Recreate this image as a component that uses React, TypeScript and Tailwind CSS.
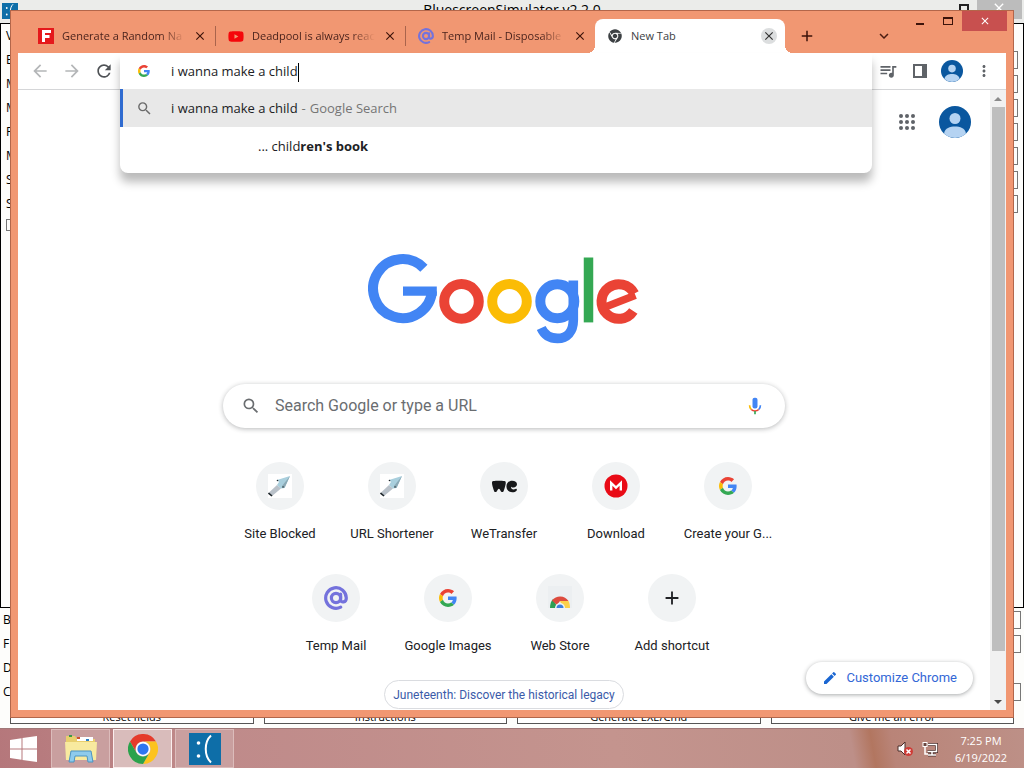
import React from 'react';
import {
  MdAdd,
  MdArrowBack,
  MdArrowForward,
  MdClose,
  MdEdit,
  MdExpandMore,
  MdMoreVert,
  MdQueueMusic,
  MdRefresh,
  MdSearch,
} from 'react-icons/md';
import { FaChrome, FaYoutube } from 'react-icons/fa';
import { SiWetransfer } from 'react-icons/si';

const GoogleG: React.FC<{ size: number }> = ({ size }) => (
  <svg width={size} height={size} viewBox="0 0 48 48" aria-hidden="true">
    <path fill="#EA4335" d="M24 9.5c3.54 0 6.71 1.22 9.21 3.6l6.85-6.85C35.9 2.38 30.47 0 24 0 14.62 0 6.51 5.38 2.56 13.22l7.98 6.19C12.43 13.72 17.74 9.5 24 9.5z" />
    <path fill="#4285F4" d="M46.98 24.55c0-1.57-.15-3.09-.38-4.55H24v9.02h12.94c-.58 2.96-2.26 5.48-4.78 7.18l7.73 6c4.51-4.18 7.09-10.36 7.09-17.65z" />
    <path fill="#FBBC05" d="M10.53 28.59c-.48-1.45-.76-2.99-.76-4.59s.27-3.14.76-4.59l-7.98-6.19C.92 16.46 0 20.12 0 24c0 3.88.92 7.54 2.56 10.78l7.97-6.19z" />
    <path fill="#34A853" d="M24 48c6.48 0 11.93-2.13 15.89-5.81l-7.73-6c-2.15 1.45-4.92 2.3-8.16 2.3-6.26 0-11.57-4.22-13.47-9.91l-7.98 6.19C6.51 42.62 14.62 48 24 48z" />
  </svg>
);

const GoogleLogo: React.FC = () => (
  <svg width="272" height="90" viewBox="0 0 272 90" fill="none" role="img" aria-label="Google">
    <path stroke="#4285F4" strokeWidth="10" d="M55.9 14.2A29.5 29.5 0 1 0 64 37" />
    <path stroke="#4285F4" strokeWidth="9.2" d="M35 37.2H68.8" />
    <circle stroke="#EA4335" strokeWidth="10" cx="93.5" cy="47.4" r="17.3" />
    <circle stroke="#FBBC05" strokeWidth="10" cx="141.5" cy="47.4" r="17.3" />
    <circle stroke="#4285F4" strokeWidth="10" cx="189.3" cy="47.2" r="17" />
    <path stroke="#4285F4" strokeWidth="9.6" d="M205.3 26.5V66c0 12-6.5 18.4-15.8 18.4-7.6 0-13.4-4-16.3-10.4" />
    <path stroke="#34A853" strokeWidth="9.5" d="M220.5 3.5V68.4" />
    <path stroke="#EA4335" strokeWidth="10" d="M265.3 57A17.3 17.3 0 1 1 266.2 39.6" />
    <path stroke="#EA4335" strokeWidth="7.6" d="M238 52.8L267.4 41.2" />
  </svg>
);

const ChromeLogo: React.FC = () => (
  <svg width="30" height="30" viewBox="0 0 48 48" aria-hidden="true">
    <path fill="#E53B2C" d="M3.2 12A24 24 0 0 1 44.8 12H24A12 12 0 0 0 13.6 30Z" />
    <path fill="#FCC31E" d="M44.8 12A24 24 0 0 1 24 48L34.4 30A12 12 0 0 0 24 12Z" />
    <path fill="#2BA24C" d="M24 48A24 24 0 0 1 3.2 12L13.6 30A12 12 0 0 0 34.4 30Z" />
    <circle cx="24" cy="24" r="11.5" fill="#fff" />
    <circle cx="24" cy="24" r="9" fill="#2E75F0" />
  </svg>
);

const AtSign: React.FC<{ size: number }> = ({ size }) => (
  <svg width={size} height={size} viewBox="0 0 24 24" fill="none" stroke="#7472dc" strokeWidth="3.2" strokeLinecap="round" aria-hidden="true">
    <circle cx="12" cy="12" r="4.6" />
    <path d="M16.6 8v5.5c0 3.8 5.7 3.2 5.7-1.5a10.3 10.3 0 1 0-5.6 9.2" />
  </svg>
);

const FakeNameIcon: React.FC = () => (
  <svg width="16" height="16" viewBox="0 0 16 16" aria-hidden="true">
    <rect width="16" height="16" fill="#e5191c" />
    <path fill="none" stroke="#fff" strokeWidth="3" d="M5.5 14V3.5H13M5.5 8.5H11.5" />
  </svg>
);

const Avatar: React.FC<{ size: number }> = ({ size }) => (
  <svg width={size} height={size} viewBox="0 0 32 32" aria-hidden="true">
    <circle cx="16" cy="16" r="16" fill="#0a579f" />
    <circle cx="16" cy="12.5" r="5.5" fill="#b5d3f2" />
    <path fill="#b5d3f2" d="M5 27.5C6 22 11 20.5 16 20.5S26 22 27 27.5A16 16 0 0 1 5 27.5Z" />
  </svg>
);

const RocketTile: React.FC = () => (
  <svg width="24" height="24" viewBox="0 0 24 24" aria-hidden="true">
    <rect width="24" height="24" fill="#fff" />
    <path fill="#b9c1c9" d="M.5 19L9 11L13 14.5L4 22Z" />
    <path fill="#a9cfdd" d="M9 6L22 2L16.5 14L13 14.5L9 11L11 8Z" />
    <path fill="#8ba9b5" d="M22 2L16.5 14L14 12Z" />
    <path fill="none" stroke="#1d252a" strokeWidth="1.6" d="M.5 19L4 22" />
    <circle cx="9.5" cy="6.5" r=".8" fill="#1d252a" />
    <circle cx="15" cy="13" r=".8" fill="#1d252a" />
  </svg>
);

const MegaIcon: React.FC = () => (
  <svg width="24" height="24" viewBox="0 0 24 24" aria-hidden="true">
    <circle cx="12" cy="12" r="11.5" fill="#e90b16" />
    <path fill="none" stroke="#fff" strokeWidth="2.4" d="M7.2 16.5V9L12 13.6L16.8 9V16.5" />
  </svg>
);

const WebStoreIcon: React.FC = () => (
  <svg width="24" height="24" viewBox="0 0 24 24" aria-hidden="true">
    <rect width="24" height="22" fill="#eceff1" />
    <path fill="#2f9e54" d="M2 22C2 18 3 15 5 13L10 22Z" />
    <path fill="#dd4b3e" d="M4 14.5A10 10 0 0 1 20.5 15H12L9 19Z" />
    <path fill="#fcd04b" d="M12 15H20.5C21.5 17 22 19.5 22 22H15Z" />
    <path fill="#eef3f8" d="M7 22a5 5 0 0 1 10 0Z" />
    <path fill="#3f7fdc" d="M8.5 22a3.5 3.5 0 0 1 7 0Z" />
  </svg>
);

const Frown: React.FC<{ size: number }> = ({ size }) => (
  <svg width={size} height={size} viewBox="0 0 32 32" aria-hidden="true">
    <rect width="32" height="32" fill="#0e6ea8" />
    <circle cx="9.5" cy="10" r="1.8" fill="#fff" />
    <circle cx="9.5" cy="23" r="1.8" fill="#fff" />
    <path fill="none" stroke="#fff" strokeWidth="2" d="M22 2.5C15 9 15 23 22 29.5" />
  </svg>
);

const tabs = [
  { title: 'Generate a Random Na', icon: <FakeNameIcon /> },
  { title: 'Deadpool is always reac', icon: <FaYoutube size={17} color="#f5060a" /> },
  { title: 'Temp Mail - Disposable', icon: <AtSign size={16} /> },
];

const shortcuts = [
  { name: 'Site Blocked', icon: <RocketTile /> },
  { name: 'URL Shortener', icon: <RocketTile /> },
  { name: 'WeTransfer', icon: <SiWetransfer size={25} color="#17181a" /> },
  { name: 'Download', icon: <MegaIcon /> },
  { name: 'Create your G...', icon: <GoogleG size={18} /> },
  { name: 'Temp Mail', icon: <AtSign size={24} /> },
  { name: 'Google Images', icon: <GoogleG size={18} /> },
  { name: 'Web Store', icon: <WebStoreIcon /> },
];

/* Simulator window that sits behind the browser */
const SimulatorWindow: React.FC = () => (
  <section className="absolute inset-0 flex flex-col overflow-hidden bg-[#fdfdfb] text-[12px] text-black">
    <header className="flex h-[23px] shrink-0 items-start justify-between bg-[#ebecea]">
      <div className="w-[90px] pt-[3px] pl-[2px]">
        <Frown size={16} />
      </div>
      <h1 className="text-[14px] leading-5">BluescreenSimulator v2.2.0</h1>
      <div className="flex w-[90px] items-start justify-end pr-[2px]">
        <span className="mt-1 mr-2 h-3 w-[10px] border-2 border-[#222]" />
        <span className="flex h-[19px] w-[45px] justify-center bg-[#bcbcbc] text-white">
          <MdClose size={16} />
        </span>
      </div>
    </header>
    <div className="flex h-[585px] shrink-0 justify-between border border-black">
      <ul className="pl-[5px] leading-6">
        {['V', 'E', 'M', 'M', 'P', 'M', 'S', 'S'].map((letter, i) => (
          <li key={i}>{letter}</li>
        ))}
        <li className="mt-[3px] h-3 w-3 border border-[#777]" />
      </ul>
      <div className="flex flex-col gap-[6px] pt-[27px] pr-[5px]">
        {[0, 1, 2, 3, 4, 5, 6].map((i) => (
          <span key={i} className="h-[18px] w-10 border border-[#777]" />
        ))}
      </div>
    </div>
    <ul className="pl-[3px] leading-6">
      {['B', 'F', 'D', 'C'].map((letter) => (
        <li key={letter} className="flex items-center justify-between pr-[3px]">
          {letter}
          {letter !== 'D' && <span className="h-[18px] w-10 border border-[#777]" />}
        </li>
      ))}
    </ul>
    <footer className="mt-auto mb-1 grid grid-cols-4 gap-[10px] px-[10px]">
      {['Reset fields', 'Instructions', 'Generate EXE/Cmd', 'Give me an error'].map((label) => (
        <button key={label} className="h-[18px] border border-[#555] bg-white pt-[2px] text-[11px] leading-4">
          {label}
        </button>
      ))}
    </footer>
  </section>
);

const TabStrip: React.FC = () => (
  <div className="flex h-[42px] shrink-0 items-end pl-[15px]">
    {tabs.map((tab) => (
      <div key={tab.title} className="flex h-[34px] w-[190px] items-center pl-3">
        <span className="flex w-4 shrink-0 justify-center">{tab.icon}</span>
        <span className="ml-2 w-[124px] bg-gradient-to-r from-[#46201a] from-80% to-[#f3976f] bg-clip-text text-[11px] whitespace-nowrap text-transparent">
          {tab.title}
        </span>
        <button aria-label={`Close ${tab.title}`} className="ml-2 text-[#3d130a]">
          <MdClose size={14} />
        </button>
        <span className="ml-2 h-5 w-px bg-[#a9644c]" />
      </div>
    ))}
    <div className="relative -ml-px flex h-[34px] w-[190px] items-center rounded-t-lg bg-white pl-[13px]">
      <span className="absolute bottom-0 -left-2 h-2 w-2 bg-[radial-gradient(circle_at_0_0,transparent_8px,white_8px)]" />
      <FaChrome size={14} color="#3c4043" />
      <span className="ml-[9px] flex-1 text-[11px] text-[#3c4043]">New Tab</span>
      <button aria-label="Close New Tab" className="mr-2 flex h-4 w-4 items-center justify-center rounded-full bg-[#dcdedf] text-[#333]">
        <MdClose size={14} />
      </button>
      <span className="absolute -right-2 bottom-0 h-2 w-2 bg-[radial-gradient(circle_at_100%_0,transparent_8px,white_8px)]" />
    </div>
    <button aria-label="New tab" className="ml-3 flex h-[34px] w-5 items-center justify-center text-[#3d130a]">
      <MdAdd size={18} />
    </button>
    <div className="flex-1" />
    <button aria-label="Search tabs" className="mr-2 flex h-[34px] w-7 items-center justify-center text-[#4a1d12]">
      <MdExpandMore size={18} />
    </button>
    <div className="mr-[6px] flex self-start">
      <button aria-label="Minimize" className="flex h-5 w-7 items-center justify-center pt-[6px]">
        <span className="h-[2px] w-2 bg-[#3d130a]" />
      </button>
      <button aria-label="Maximize" className="flex h-5 w-7 items-center justify-center">
        <span className="h-2 w-[10px] border border-t-2 border-[#3d130a]" />
      </button>
      <button aria-label="Close" className="flex h-5 w-[45px] items-center justify-center bg-[#c8504f] text-white">
        <MdClose size={12} />
      </button>
    </div>
  </div>
);

const Omnibox: React.FC = () => (
  <div className="relative h-full flex-1">
    <div className="absolute inset-x-0 top-0 z-20 overflow-hidden rounded-b-lg bg-white pb-2 text-[13px] text-[#202124] shadow-[0_9px_10px_rgba(0,0,0,0.27)]">
      <div className="flex h-9 items-center pl-[18px]">
        <GoogleG size={12} />
        <div className="ml-[21px] flex flex-1 items-center pt-[2px]">
          <input
            aria-label="Address and search bar"
            className="field-sizing-content bg-transparent outline-none"
            defaultValue="i wanna make a child"
          />
          <span className="h-[19px] w-px bg-black" />
        </div>
      </div>
      <div className="flex h-[38px] items-center border-l-[3px] border-[#2f6bd0] bg-[#e8e8e8] pl-[13px]">
        <MdSearch size={17} color="#6b6b6b" />
        <p className="ml-[18px] flex gap-1 pt-[2px]">
          <span>i wanna make a child</span>
          <span className="text-[#757575]">-</span>
          <span className="text-[#757575]">Google Search</span>
        </p>
      </div>
      <div className="flex h-[38px] items-center pl-[138px]">
        <p className="pt-[2px]">
          ... child<b>ren's book</b>
        </p>
      </div>
    </div>
  </div>
);

const toolButton = 'flex h-8 w-8 items-center justify-center';

const Toolbar: React.FC = () => (
  <div className="flex h-[37px] shrink-0 items-center border-b border-[#d5d6d8] bg-white px-[6px] text-[#5f6368]">
    <button aria-label="Back" className={`${toolButton} text-[#b4b6b8]`}><MdArrowBack size={20} /></button>
    <button aria-label="Forward" className={`${toolButton} text-[#b4b6b8]`}><MdArrowForward size={20} /></button>
    <button aria-label="Reload" className={`${toolButton} text-[#4f5256]`}><MdRefresh size={20} /></button>
    <Omnibox />
    <button aria-label="Media controls" className={toolButton}><MdQueueMusic size={20} /></button>
    <button aria-label="Side panel" className={toolButton}>
      <span className="h-[14px] w-[14px] border-2 border-r-[5px] border-[#5f6368]" />
    </button>
    <button aria-label="Profile" className={toolButton}><Avatar size={22} /></button>
    <button aria-label="Menu" className={toolButton}><MdMoreVert size={18} /></button>
  </div>
);

const NewTabPage: React.FC = () => (
  <main className="relative flex min-w-0 flex-1 flex-col items-center overflow-hidden bg-white font-[Roboto,sans-serif] text-[#202124]">
    <div className="flex shrink-0 items-center gap-6 self-end pt-4 pr-[19px]">
      <button aria-label="Google apps" className="grid grid-cols-3 gap-[2px]">
        {[0, 1, 2, 3, 4, 5, 6, 7, 8].map((i) => (
          <span key={i} className="h-1 w-1 rounded-full bg-[#5f6368]" />
        ))}
      </button>
      <button aria-label="Google account"><Avatar size={32} /></button>
    </div>

    <div className="mt-[116px] shrink-0"><GoogleLogo /></div>

    <div className="mt-10 flex h-[44px] w-[562px] shrink-0 items-center rounded-full bg-white pr-5 pl-[18px] shadow-[0_1px_5px_rgba(32,33,36,0.32)]">
      <MdSearch size={20} color="#6a6d70" />
      <input
        aria-label="Search Google or type a URL"
        placeholder="Search Google or type a URL"
        className="ml-[14px] flex-1 bg-transparent text-[16px] outline-none placeholder:text-[#6a6d70]"
      />
      <button aria-label="Search by voice">
        <svg width="20" height="20" viewBox="0 0 24 24" fill="none">
          <rect x="9" y="2" width="6" height="13" rx="2.5" fill="#4285F4" />
          <path stroke="#FBBC05" strokeWidth="2" d="M5.5 11C5.5 13.5 6.3 15 7.5 16.2" />
          <path stroke="#EA4335" strokeWidth="2" d="M7.5 16.2C10 18.5 14 18.5 16.5 16.2" />
          <path stroke="#4285F4" strokeWidth="2" d="M16.5 16.2C17.7 15 18.5 13.5 18.5 11" />
          <path stroke="#34A853" strokeWidth="2" d="M12 18V22" />
        </svg>
      </button>
    </div>

    <nav className="mt-[18px] flex w-[560px] shrink-0 flex-wrap justify-center text-[13px]">
      {shortcuts.map((item) => (
        <a key={item.name} href="#" className="flex h-28 w-28 flex-col items-center pt-4">
          <span className="flex h-12 w-12 items-center justify-center rounded-full bg-[#f1f3f4]">{item.icon}</span>
          <span className="mt-[14px] leading-5">{item.name}</span>
        </a>
      ))}
      <button className="flex h-28 w-28 flex-col items-center pt-4">
        <span className="flex h-12 w-12 items-center justify-center rounded-full bg-[#f1f3f4]"><MdAdd size={22} /></span>
        <span className="mt-[14px] leading-5">Add shortcut</span>
      </button>
    </nav>

    <a href="#" className="mt-[10px] flex h-[29px] shrink-0 items-center rounded-full border border-[#dadce0] px-2 text-[12px] text-[#3b5ba9]">
      Juneteenth: Discover the historical legacy
    </a>

    <button className="absolute right-[17px] bottom-4 flex h-8 items-center gap-2 rounded-full bg-white px-4 text-[13px] text-[#3367d6] shadow-[0_1px_4px_rgba(60,64,67,0.45)]">
      <MdEdit size={16} color="#1a66d2" />
      Customize Chrome
    </button>
  </main>
);

const BrowserWindow: React.FC = () => (
  <section className="absolute inset-[10px] flex flex-col border border-[#b3664a] bg-[#f19772]">
    <TabStrip />
    <div className="mx-[7px] mb-[7px] flex min-h-0 flex-1 flex-col">
      <Toolbar />
      <div className="flex min-h-0 flex-1">
        <NewTabPage />
        <div className="flex w-4 flex-col items-center bg-[#f1f1f1]">
          <span className="flex h-[17px] items-center">
            <span className="border-x-4 border-b-4 border-x-transparent border-b-[#8a8a8a]" />
          </span>
          <span className="h-[544px] w-[13px] bg-[#bebebe]" />
          <span className="mt-auto flex h-[17px] items-center">
            <span className="border-x-4 border-t-4 border-x-transparent border-t-[#4a4a4a]" />
          </span>
        </div>
      </div>
    </div>
  </section>
);

const Taskbar: React.FC = () => (
  <footer className="flex h-10 shrink-0 items-center border-t border-[#a07878] bg-[linear-gradient(80deg,#b5777b_0%,#bf8a8a_20%,#c4948e_60%,#bd8f88_83%,#b27660_85%,#b98478_87%,#bd9087_100%)]">
    <button aria-label="Start" className="flex w-[51px] justify-center pr-1">
      <svg width="27" height="26" viewBox="0 0 27 26" fill="#fff">
        <path d="M0 4L11.5 2.3V12.5H0ZM12.5 2.1L27 0V12.5H12.5ZM0 13.5H11.5V23.7L0 22ZM12.5 13.5H27V26L12.5 23.9Z" />
      </svg>
    </button>
    <div className="flex h-full gap-[3px]">
      <button aria-label="File Explorer" className="flex w-[59px] items-center justify-center border border-[#dcbcbb] bg-[#c99f9f]">
        <svg width="32" height="29" viewBox="0 0 32 29">
          <path fill="#e9cf6d" d="M1 2h9l2 3h18v21H1Z" />
          <path fill="#fff" d="M12 3h16v4H12Z" />
          <path fill="#3b9a4a" d="M4 1h3v2H4Z" />
          <path fill="#d0542c" d="M12 3h3v2h-3Z" />
          <path fill="#2c7fc4" d="M21 5h3v2h-3Z" />
          <path fill="#f8ea9f" d="M0 8h32l-1 18H1Z" />
          <path fill="#8ecbec" stroke="#4b94c2" d="M4 28l2-11h20l2 11h-5l-1-6H10l-1 6Z" />
        </svg>
      </button>
      <button aria-label="Google Chrome" className="flex w-[59px] items-center justify-center border border-[#fbeeee] bg-[#d9bcbb]"><ChromeLogo /></button>
      <button aria-label="BluescreenSimulator" className="flex w-[59px] items-center justify-center border border-[#dcbcbb] bg-[#c99f9f]"><Frown size={32} /></button>
    </div>
    <div className="flex-1" />
    <div className="flex items-center gap-2">
      <svg width="17" height="17" viewBox="0 0 17 17" aria-label="Muted">
        <path fill="#fff" stroke="#4a2c28" d="M1 6h3l4-4v13l-4-4H1Z" />
        <circle cx="11.5" cy="11.5" r="4.5" fill="#cf3b36" />
        <path stroke="#fff" strokeWidth="1.5" d="M9.5 9.5l4 4M13.5 9.5l-4 4" />
      </svg>
      <svg width="16" height="16" viewBox="0 0 16 16" fill="none" aria-label="Network">
        <path stroke="#4a2c28" strokeWidth="3" d="M6 3.5h8.5v7H5.5M10 11v3M6 14h8" />
        <path stroke="#fff" strokeWidth="1.5" d="M6 3.5h8.5v7H5.5M10 11v3M6 14h8M3 6v7h3" />
        <rect x="1" y="1.5" width="4" height="4" stroke="#fff" fill="#6b4640" />
      </svg>
    </div>
    <div className="mr-[11px] ml-[11px] w-[64px] text-center text-[11px] leading-[17px] text-white">
      <p>7:25 PM</p>
      <p>6/19/2022</p>
    </div>
  </footer>
);

export default function App() {
  return (
    <div className="flex h-screen flex-col overflow-hidden font-['Open_Sans','Noto_Sans',sans-serif]">
      <div className="relative min-h-0 flex-1">
        <SimulatorWindow />
        <BrowserWindow />
      </div>
      <Taskbar />
    </div>
  );
}
